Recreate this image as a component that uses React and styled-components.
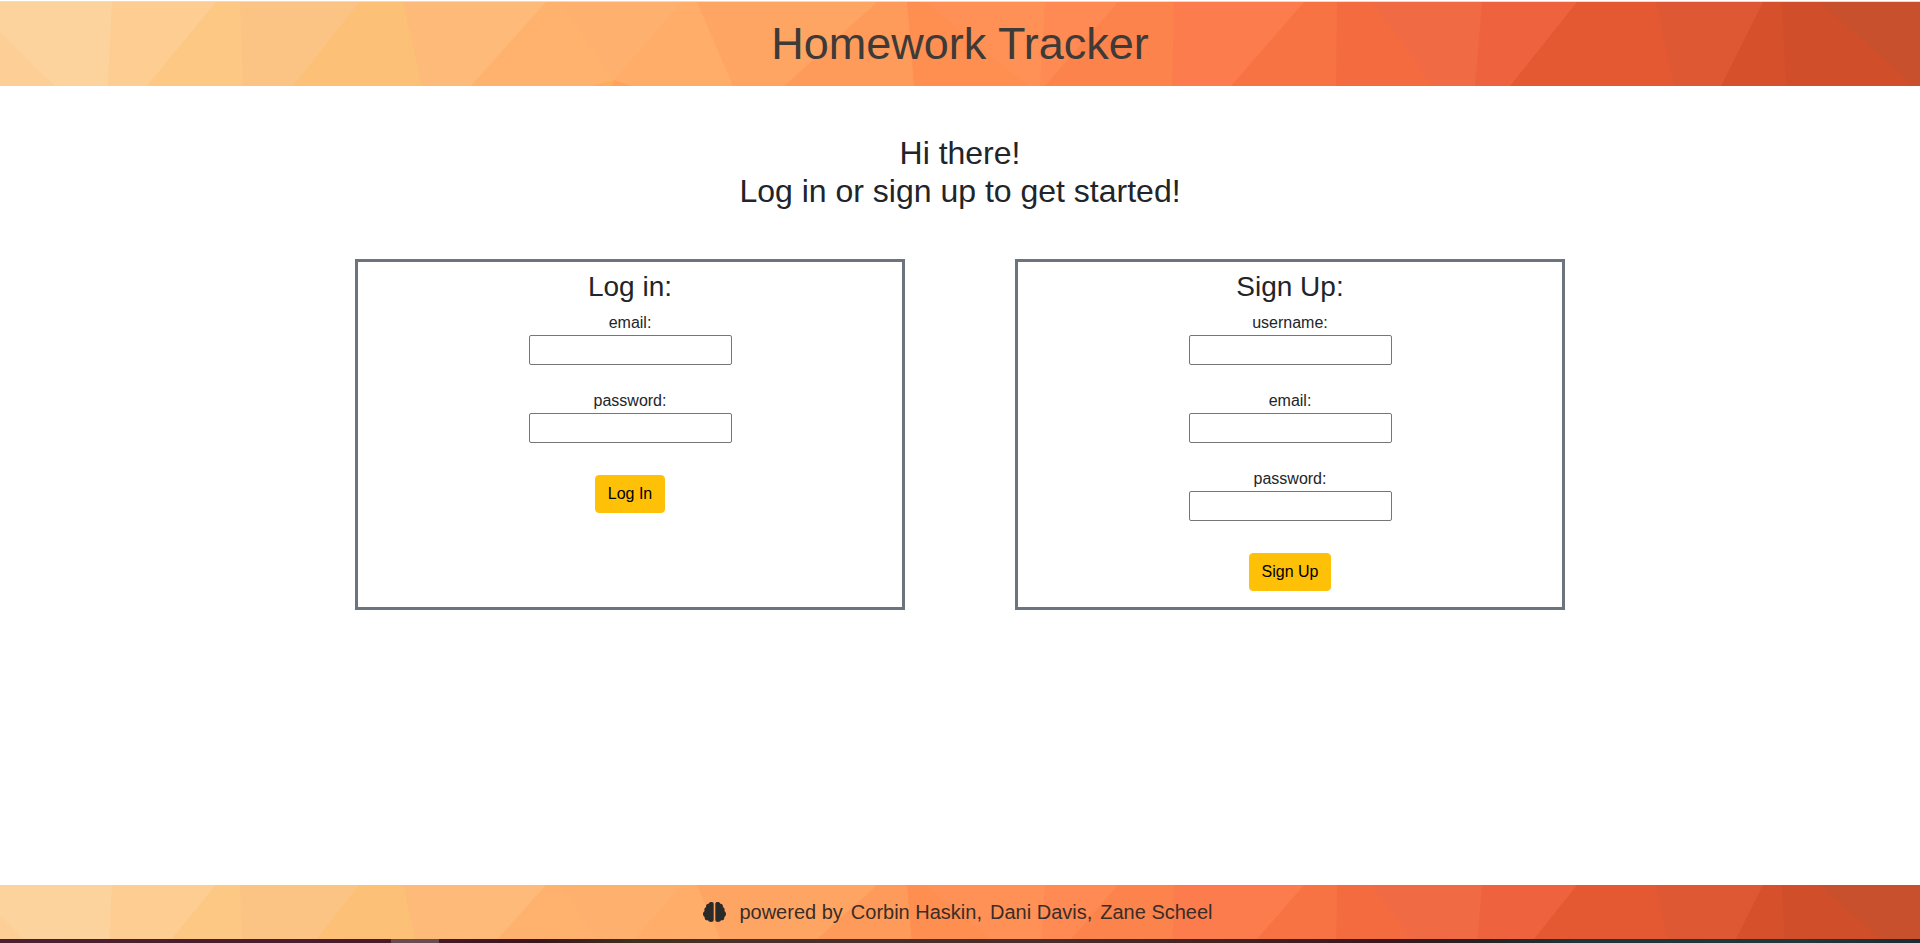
import React, { useId } from 'react';
import styled, { createGlobalStyle } from 'styled-components';

const GlobalStyle = createGlobalStyle`
  *, *::before, *::after { box-sizing: border-box; }
  body {
    margin: 0;
    background: #fff;
    color: #212529;
    font-family: "Liberation Sans", Arial, sans-serif;
    font-size: 16px;
    line-height: 24px;
  }
`;

const Page = styled.div`
  min-height: 100vh;
  display: flex;
  flex-direction: column;
  border-top: 1px solid #fff;
`;

const Banner = styled.div`
  position: relative;
  display: flex;
  align-items: center;
  justify-content: center;
  overflow: hidden;
`;

const Header = styled(Banner).attrs({ as: 'header' })`
  padding: 16px;
  border-top: 1px solid #dcdfe0;
`;

const Footer = styled(Banner).attrs({ as: 'footer' })`
  gap: 13px;
  padding: 12px 16px 12px 12px;
  color: #3a2d27;
  font-size: 20px;
  line-height: 30px;
`;

const Backdrop = styled.svg`
  position: absolute;
  inset: 0;
  width: 100%;
  height: 100%;
`;

const Title = styled.h1`
  position: relative;
  margin: 0;
  color: #3d3a38;
  font-size: 45px;
  font-weight: 400;
  line-height: 52px;
`;

const Brain = styled.svg`
  position: relative;
  flex: none;
  width: 23px;
  height: 20px;
  fill: #2a2a28;
`;

const Credits = styled.p`
  position: relative;
  display: flex;
  gap: 8px;
  margin: 0;
`;

const Main = styled.main`
  flex: 1;
  display: flex;
  flex-direction: column;
  align-items: center;
  gap: 49px;
  padding: 48px 0;
`;

const Greeting = styled.h2`
  margin: 0;
  font-size: 32px;
  font-weight: 400;
  line-height: 38px;
  text-align: center;
`;

const Cards = styled.div`
  display: flex;
  justify-content: space-around;
  width: 100%;
  max-width: 1320px;
`;

const Card = styled.form`
  flex: 0 0 calc(100% * 5 / 12);
  display: flex;
  flex-direction: column;
  align-items: center;
  gap: 24px;
  padding: 8px 12px 16px;
  border: 3px solid #6c757d;
`;

const CardHead = styled.h3`
  margin: 0 0 -16px;
  font-size: 28px;
  font-weight: 400;
  line-height: 33px;
`;

const Field = styled.div`
  display: flex;
  flex-direction: column;
  align-items: center;
`;

const Input = styled.input`
  width: 203px;
  height: 30px;
  padding: 1px 2px;
  border: 1px solid #767676;
  border-radius: 2px;
  background: #fff;
  font: inherit;
`;

const Button = styled.button`
  margin-top: 8px;
  padding: 6px 12px;
  border: 1px solid #ffc107;
  border-radius: 4px;
  background: #ffc107;
  color: #000;
  font: inherit;
  cursor: pointer;
`;

const Strip = styled.div`
  height: 4px;
  background:
    linear-gradient(#6b4a50, #6b4a50) 20.9% 0 / 48px 4px no-repeat,
    linear-gradient(90deg, #4c2030 0%, #4a1c2a 20%, #3c1519 28%, #40301f 33%, #4a3028 38%,
      #4a2c28 55%, #42201f 66%, #3b171b 72%, #262220 77%, #1f3539 82%, #20373c 94%, #1c2c32 100%);
`;

// Each facet runs from its slanted left edge (x at top, x at bottom) to the right side.
const facets = [
  [112, 108, '#fdcd92'],
  [216, 147, '#fdc784'],
  [240, 243, '#fcc484'],
  [359, 293, '#fcc077'],
  [403, 422, '#fdba78'],
  [546, 471, '#ffb26d'],
  [559, 618, '#feb16f'],
  [681, 609, '#ffad69'],
  [697, 733, '#ffa564'],
  [877, 784, '#ff9b5a'],
  [907, 914, '#ff8e51'],
  [925, 1028, '#ff9156'],
  [1045, 1040, '#ff8a54'],
  [1118, 1045, '#fc834c'],
  [1174, 1172, '#fd7c4e'],
  [1304, 1231, '#f87344'],
  [1337, 1336, '#f36b3f'],
  [1372, 1433, '#f06a43'],
  [1482, 1475, '#ee633d'],
  [1577, 1510, '#e45832'],
  [1656, 1674, '#de5833'],
  [1763, 1721, '#d6502c'],
  [1782, 1786, '#d04e29'],
  [1819, 1915, '#c9502c'],
];

function Facets() {
  return (
    <Backdrop viewBox="0 0 1920 84" preserveAspectRatio="xMidYMin slice" aria-hidden="true">
      <rect width="1920" height="84" fill="#fcd39c" />
      <polygon points="0,31 55,84 0,84" fill="#fdcf96" />
      {facets.map(([top, bottom, fill]) => (
        <polygon key={top} points={`${top},0 1920,0 1920,84 ${bottom},84`} fill={fill} />
      ))}
      <polygon points="614,78 592,84 612,84" fill="#fdae5b" />
      <polygon points="614,78 612,84 632,84" fill="#fda35a" />
    </Backdrop>
  );
}

const lobe =
  'M32 6C32 2 29 0 25 0c-4 0-7 2-8 5C12 5 9 8 9 12c0 1 0 2 1 3-4 1-6 5-6 9 0 1 0 2 1 3-3 2-5 5-5 9 0 4 2 7 5 9v2c0 5 3 8 8 8h2c1 3 5 5 9 5 5 0 8-2 8-6z';

function BrainIcon() {
  return (
    <Brain viewBox="0 0 69 60" aria-hidden="true">
      <path d={lobe} />
      <path d={lobe} transform="matrix(-1 0 0 1 69 0)" />
    </Brain>
  );
}

function LabeledInput({ label, type }) {
  const id = useId();
  return (
    <Field>
      <label htmlFor={id}>{label}:</label>
      <Input id={id} type={type} />
    </Field>
  );
}

export default function App() {
  const submit = (event) => event.preventDefault();
  return (
    <>
      <GlobalStyle />
      <Page>
        <Header>
          <Facets />
          <Title>Homework Tracker</Title>
        </Header>
        <Main>
          <Greeting>
            Hi there!
            <br />
            Log in or sign up to get started!
          </Greeting>
          <Cards>
            <Card onSubmit={submit}>
              <CardHead>Log in:</CardHead>
              <LabeledInput label="email" type="text" />
              <LabeledInput label="password" type="password" />
              <Button type="submit">Log In</Button>
            </Card>
            <Card onSubmit={submit}>
              <CardHead>Sign Up:</CardHead>
              <LabeledInput label="username" type="text" />
              <LabeledInput label="email" type="text" />
              <LabeledInput label="password" type="password" />
              <Button type="submit">Sign Up</Button>
            </Card>
          </Cards>
        </Main>
        <Footer>
          <Facets />
          <BrainIcon />
          <Credits>
            <span>powered by</span>
            <span>Corbin Haskin,</span>
            <span>Dani Davis,</span>
            <span>Zane Scheel</span>
          </Credits>
        </Footer>
        <Strip />
      </Page>
    </>
  );
}
